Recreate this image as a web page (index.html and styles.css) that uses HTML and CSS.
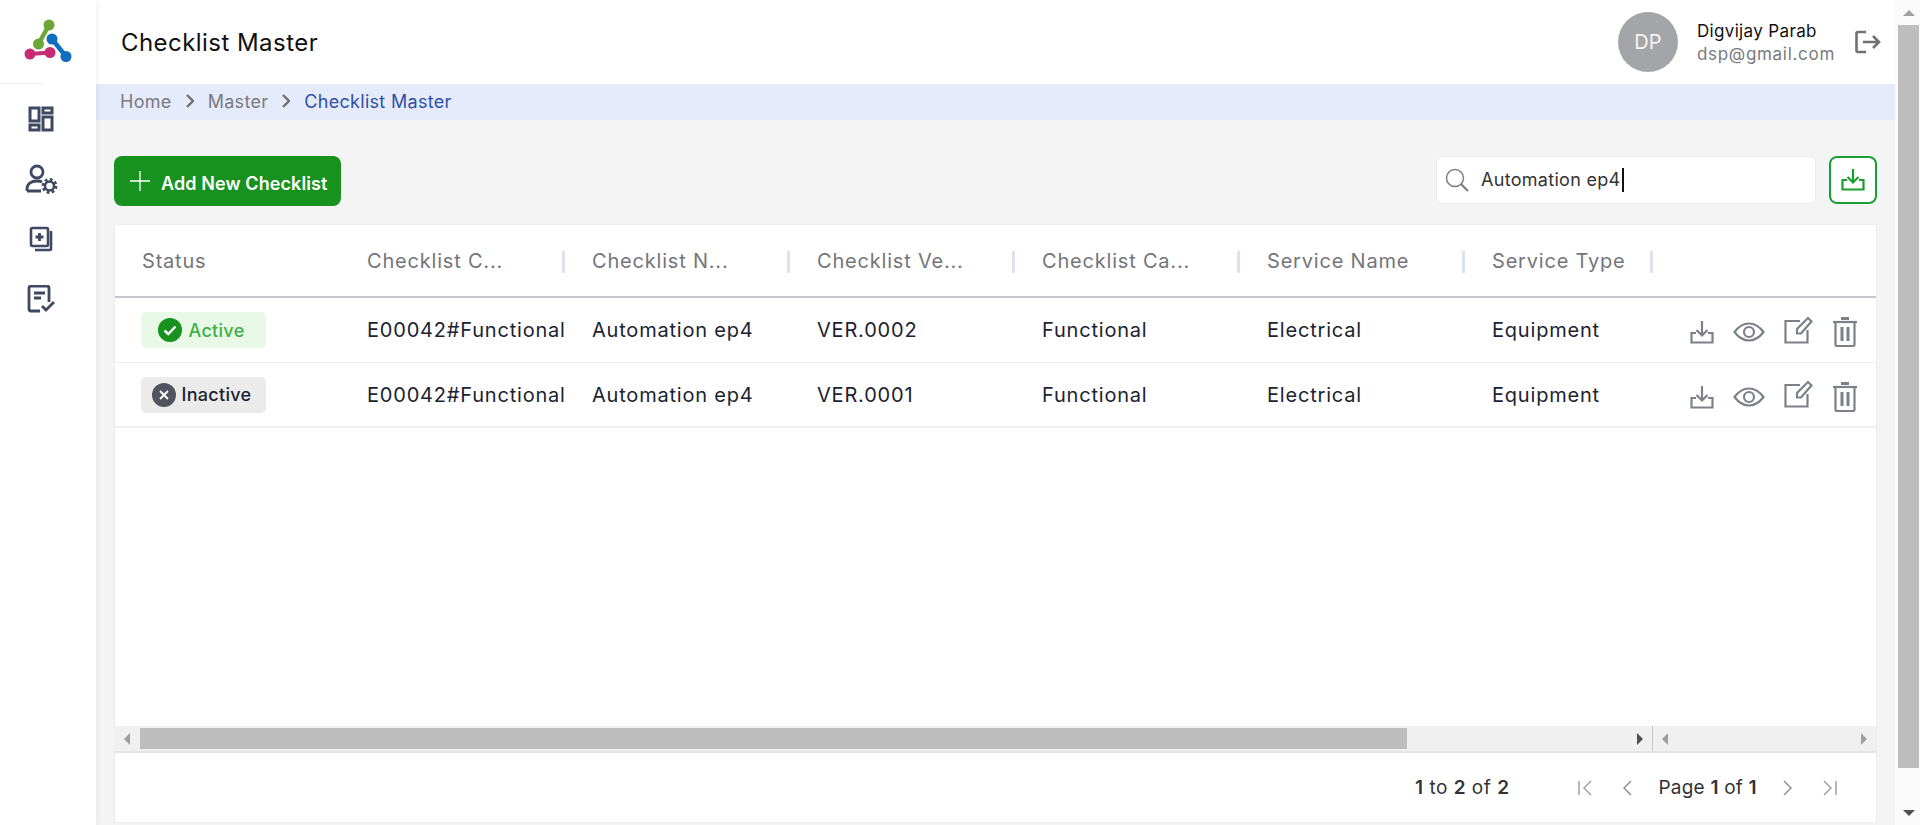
FILE: index.html
```html
<!DOCTYPE html>
<html lang="en">
<head>
  <meta charset="UTF-8" />
  <title>Checklist Master</title>
  <link rel="stylesheet" href="styles.css">
</head>
<body>
  <div class="app">
    <!-- Left icon rail -->
    <aside class="sidebar">
      <div class="logo">
        <svg width="60" height="60" viewBox="0 0 60 60">
          <g fill="#6ba637"><circle cx="49" cy="25" r="5.5"/><circle cx="38.500" cy="44" r="5.500"/><path d="M49 25L38.500 44" stroke="#6ba637" stroke-width="4.500"/></g>
          <g fill="#c62b73"><circle cx="30" cy="54" r="5.500"/><circle cx="50" cy="52.500" r="5.500"/><path d="M30 54L50 52.500" stroke="#c62b73" stroke-width="4"/></g>
          <g fill="#0f6fbe"><circle cx="52" cy="39" r="5.500"/><circle cx="66" cy="56.500" r="5.500"/><path d="M52 39L66 56.500" stroke="#0f6fbe" stroke-width="4.500"/></g>
        </svg>
      </div>
      <nav class="rail">
        <a href="#" class="rail-item">
          <svg width="26" height="26" viewBox="0 0 26 26" fill="none" stroke="#3f4861" stroke-width="3">
            <rect x="2" y="2" width="9" height="13"/><rect x="15" y="2" width="9" height="5"/><rect x="2" y="19" width="9" height="5"/><rect x="15" y="11" width="9" height="13"/>
          </svg>
        </a>
        <a href="#" class="rail-item">
          <svg class="gear-icon" width="32" height="30" viewBox="0 0 32 30" fill="none" stroke="#3f4861" stroke-width="2.800">
            <circle cx="12" cy="8" r="6"/><path d="M2 27v-2c0-5 4-8 10-8 2 0 4 .4 5 1M2 27h14"/>
            <circle cx="24.500" cy="22" r="4.500" stroke-width="2.600"/><circle cx="24.500" cy="22" r="6.600" stroke-dasharray="2.800 2.400" stroke-width="2.600"/>
          </svg>
        </a>
        <a href="#" class="rail-item">
          <svg width="24" height="26" viewBox="0 0 24 26" fill="none" stroke="#3f4861" stroke-width="2.600">
            <rect x="2" y="2" width="17" height="18" rx="1.500"/><path d="M22 5v18a1 1 0 0 1-1 1H6"/><path d="M10.500 7v8M6.500 11h8" stroke-width="2.800"/>
          </svg>
        </a>
        <a href="#" class="rail-item">
          <svg width="28" height="28" viewBox="0 0 28 28" fill="none" stroke="#3f4861" stroke-width="2.800">
            <path d="M13 26H4a2 2 0 0 1-2-2V3a2 2 0 0 1 2-2h16a2 2 0 0 1 2 2v14"/><path d="M7 8h11M7 13h7"/><path d="M15 21l4 4 8-8"/>
          </svg>
        </a>
      </nav>
    </aside>

    <div class="content">
      <header class="topbar">
        <h1>Checklist Master</h1>
        <div class="user">
          <div class="avatar">DP</div>
          <div class="user-info">
            <span class="user-name">Digvijay Parab</span>
            <span class="user-mail">dsp@gmail.com</span>
          </div>
          <svg class="logout" width="26" height="24" viewBox="0 0 26 24" fill="none" stroke="#717175" stroke-width="2.600">
            <path d="M11 2H3a1.500 1.500 0 0 0-1.500 1.500v17A1.500 1.500 0 0 0 3 22h8"/><path d="M8 12h16M18 6l6 6-6 6"/>
          </svg>
        </div>
      </header>

      <div class="crumbs">
        <a href="#">Home</a>
        <svg width="8" height="14" viewBox="0 0 8 14" fill="none" stroke="#707070" stroke-width="2.400"><path d="M1 1l6 6-6 6"/></svg>
        <a href="#">Master</a>
        <svg width="8" height="14" viewBox="0 0 8 14" fill="none" stroke="#707070" stroke-width="2.400"><path d="M1 1l6 6-6 6"/></svg>
        <span class="crumb-now">Checklist Master</span>
      </div>

      <main class="main">
        <div class="toolbar">
          <button class="add-btn">
            <svg width="20" height="20" viewBox="0 0 20 20" stroke="#fff" stroke-width="1.300"><path d="M10 0v20M0 10h20"/></svg>
            <span class="add-label">Add New Checklist</span>
          </button>
          <div class="toolbar-right">
            <div class="search">
              <svg width="24" height="24" viewBox="0 0 24 24" fill="none" stroke="#7b7d84" stroke-width="1.500"><circle cx="10" cy="10" r="8.500"/><path d="M16 16l7 7" stroke-width="2.200"/></svg>
              <span class="search-text">Automation ep4</span>
            </div>
            <button class="export-btn">
              <svg width="24" height="24" viewBox="0 0 24 24" fill="none" stroke="#18a02c" stroke-width="2.200"><path d="M12 1v13M6.500 9l5.500 5.500L17.500 9"/><path d="M6 12H1.500v9.500h21V12H18"/></svg>
            </button>
          </div>
        </div>

        <section class="grid-card">
          <div class="grid-row grid-head">
            <div class="cell">Status</div>
            <div class="cell sep">Checklist C...</div>
            <div class="cell sep">Checklist N...</div>
            <div class="cell sep">Checklist Ve...</div>
            <div class="cell sep">Checklist Ca...</div>
            <div class="cell sep">Service Name</div>
            <div class="cell sep">Service Type</div>
            <div class="cell"></div>
          </div>

          <div class="grid-row body-row">
            <div class="cell status-cell">
              <span class="badge badge-active">
                <svg width="24" height="24" viewBox="0 0 24 24"><circle cx="12" cy="12" r="12" fill="#18921e"/><path d="M6.500 12.500l3.800 3.500 7.200-7.500" fill="none" stroke="#fff" stroke-width="2.400"/></svg>
                Active
              </span>
            </div>
            <div class="cell">E00042#Functional</div>
            <div class="cell">Automation ep4</div>
            <div class="cell">VER.0002</div>
            <div class="cell">Functional</div>
            <div class="cell">Electrical</div>
            <div class="cell">Equipment</div>
            <div class="cell actions">
              <svg width="24" height="24" viewBox="0 0 24 24" fill="none" stroke="#7c8089" stroke-width="2.200"><path d="M12 1v14M6.500 10l5.500 5.500 5.500-5.500"/><path d="M6 13H1.500v9.500h21V13H18"/></svg>
              <svg width="32" height="20" viewBox="0 0 32 20" fill="none" stroke="#7c8089" stroke-width="2.200"><path d="M1.500 10C6 4 10.500 1.500 16 1.500S26 4 30.500 10C26 16 21.500 18.500 16 18.500S6 16 1.500 10z"/><circle cx="16" cy="10" r="5"/></svg>
              <svg class="edit-icon" width="29" height="28" viewBox="0 0 29 28" fill="none" stroke="#7c8089" stroke-width="2.200"><path d="M16 5H1.500v21.500h22V14"/><path d="M13 17.500v-4.500L24 2l3.500 3.500L17 17.500z"/></svg>
              <svg width="26" height="30" viewBox="0 0 26 30" fill="none" stroke="#7c8089" stroke-width="2.200"><path d="M1 5h24"/><path d="M9 1.500h8" stroke-width="3"/><path d="M3.500 5v22.500a1.500 1.500 0 0 0 1.500 1.500h16a1.500 1.500 0 0 0 1.500-1.500V5"/><path d="M10 10v14M16 10v14" stroke-width="3"/></svg>
            </div>
          </div>

          <div class="grid-row body-row last-row">
            <div class="cell status-cell">
              <span class="badge badge-inactive">
                <svg width="24" height="24" viewBox="0 0 24 24"><circle cx="12" cy="12" r="12" fill="#52555f"/><path d="M8 8l8 8M16 8l-8 8" fill="none" stroke="#fff" stroke-width="1.800"/></svg>
                Inactive
              </span>
            </div>
            <div class="cell">E00042#Functional</div>
            <div class="cell">Automation ep4</div>
            <div class="cell">VER.0001</div>
            <div class="cell">Functional</div>
            <div class="cell">Electrical</div>
            <div class="cell">Equipment</div>
            <div class="cell actions">
              <svg width="24" height="24" viewBox="0 0 24 24" fill="none" stroke="#7c8089" stroke-width="2.200"><path d="M12 1v14M6.500 10l5.500 5.500 5.500-5.500"/><path d="M6 13H1.500v9.500h21V13H18"/></svg>
              <svg width="32" height="20" viewBox="0 0 32 20" fill="none" stroke="#7c8089" stroke-width="2.200"><path d="M1.500 10C6 4 10.500 1.500 16 1.500S26 4 30.500 10C26 16 21.500 18.500 16 18.500S6 16 1.500 10z"/><circle cx="16" cy="10" r="5"/></svg>
              <svg class="edit-icon" width="29" height="28" viewBox="0 0 29 28" fill="none" stroke="#7c8089" stroke-width="2.200"><path d="M16 5H1.500v21.500h22V14"/><path d="M13 17.500v-4.500L24 2l3.500 3.500L17 17.500z"/></svg>
              <svg width="26" height="30" viewBox="0 0 26 30" fill="none" stroke="#7c8089" stroke-width="2.200"><path d="M1 5h24"/><path d="M9 1.500h8" stroke-width="3"/><path d="M3.500 5v22.500a1.500 1.500 0 0 0 1.500 1.500h16a1.500 1.500 0 0 0 1.500-1.500V5"/><path d="M10 10v14M16 10v14" stroke-width="3"/></svg>
            </div>
          </div>

          <div class="grid-empty"></div>

          <!-- Horizontal scrollbars of the grid -->
          <div class="hscroll">
            <div class="hscroll-center">
              <span class="tri tri-left"></span>
              <div class="hscroll-track"><div class="hscroll-thumb"></div></div>
              <span class="tri tri-right tri-dark"></span>
            </div>
            <div class="hscroll-pinned">
              <span class="tri tri-left"></span>
              <span class="tri tri-right"></span>
            </div>
          </div>

          <footer class="pager">
            <span class="pager-count"><b>1</b> to <b>2</b> of <b>2</b></span>
            <div class="pager-nav">
              <svg width="14" height="16" viewBox="0 0 14 16" fill="none" stroke="#9a9a9a" stroke-width="1.400"><path d="M1 1v14M13 1L6 8l7 7"/></svg>
              <svg width="10" height="16" viewBox="0 0 10 16" fill="none" stroke="#8a8a8a" stroke-width="1.400"><path d="M9 1L2 8l7 7"/></svg>
              <span class="pager-page">Page <b>1</b> of <b>1</b></span>
              <svg width="10" height="16" viewBox="0 0 10 16" fill="none" stroke="#8a8a8a" stroke-width="1.400"><path d="M1 1l7 7-7 7"/></svg>
              <svg width="14" height="16" viewBox="0 0 14 16" fill="none" stroke="#9a9a9a" stroke-width="1.400"><path d="M13 1v14M1 1l7 7-7 7"/></svg>
            </div>
          </footer>
        </section>
      </main>
    </div>

    <!-- Page scrollbar -->
    <div class="vscroll">
      <span class="tri tri-up"></span>
      <div class="vscroll-thumb"></div>
      <span class="tri tri-down"></span>
    </div>
  </div>
</body>
</html>
```

FILE: styles.css
```css
* {
  box-sizing: border-box;
}

html, body {
  margin: 0;
  padding: 0;
  height: 825px;
  overflow: hidden;
}

body {
  font-family: 'Inter', 'Noto Sans', sans-serif;
  font-size: 20px;
  letter-spacing: 0.8px;
  color: #1c2330;
  background-color: #f4f4f4;
}

a {
  color: inherit;
  text-decoration: none;
}

.app {
  display: flex;
  height: 825px;
}

/* sidebar */
.sidebar {
  width: 96px;
  flex-shrink: 0;
  background: #fff;
  box-shadow: 2px 0 5px rgba(0,0,0,0.05);
  position: relative;
  z-index: 2;
}

.logo {
  height: 84px;
  border-bottom: 1px solid #f1f1f1;
  margin-right: 52px;
}

.logo svg {
  display: block;
  overflow: visible;
}

.rail {
  display: flex;
  flex-direction: column;
  align-items: center;
  padding-top: 5px;
}

.rail-item {
  display: flex;
  align-items: center;
  justify-content: center;
  width: 48px;
  height: 60px;
  margin-left: -15px;
}

.rail-item svg {
  display: block;
}

.gear-icon {
  overflow: visible;
}

/* header */
.content {
  flex: 1;
  min-width: 0;
  display: flex;
  flex-direction: column;
}

.topbar {
  height: 84px;
  background: #fff;
  display: flex;
  justify-content: space-between;
  align-items: center;
  padding: 0 14px 0 25px;
}

.topbar h1 {
  margin: 0;
  font-size: 24px;
  font-weight: 400;
  letter-spacing: 0.45px;
  color: #111;
}

.user {
  display: flex;
  align-items: center;
}

.avatar {
  width: 60px;
  height: 60px;
  border-radius: 50%;
  background: #a4a5a9;
  color: #f4f4f4;
  font-size: 20px;
  letter-spacing: 0;
  display: flex;
  align-items: center;
  justify-content: center;
}

.user-info {
  display: flex;
  flex-direction: column;
  margin-left: 19px;
  gap: 3px;
}

.user-name {
  font-size: 17px;
  letter-spacing: 0.35px;
  color: #111;
}

.user-mail {
  font-size: 17px;
  letter-spacing: 0.7px;
  color: #7a7a7f;
}

.logout {
  margin-left: 20px;
}

/* breadcrumb */
.crumbs {
  height: 36px;
  background: #e5ebfa;
  display: flex;
  align-items: center;
  gap: 14px;
  padding: 0 0 2px 24px;
  font-size: 18px;
  letter-spacing: 0.3px;
  color: #7a7a7f;
}

.crumb-now {
  color: #2f4fa8;
}

/* toolbar */
.main {
  flex: 1;
  min-height: 0;
  padding: 36px 18px 0;
  display: flex;
  flex-direction: column;
}

.toolbar {
  display: flex;
  justify-content: space-between;
  align-items: flex-start;
  height: 68px;
}

.add-btn {
  width: 227px;
  height: 50px;
  background: #18921e;
  border: none;
  border-radius: 8px;
  color: #fff;
  font-family: inherit;
  font-size: 18px;
  font-weight: 600;
  letter-spacing: 0.1px;
  display: flex;
  align-items: center;
  gap: 11px;
  padding: 0 0 0 16px;
}

.add-label {
  padding-top: 4px;
}

.toolbar-right {
  display: flex;
  gap: 13px;
}

.search {
  width: 380px;
  height: 48px;
  background: #fff;
  border: 1px solid #ececec;
  border-radius: 6px;
  display: flex;
  align-items: center;
  gap: 12px;
  padding-left: 8px;
  font-size: 18px;
  letter-spacing: 0.3px;
  color: #333;
}

.search-text {
  border-right: 2px solid #111;
  padding-right: 1px;
  line-height: 24px;
}

.export-btn {
  width: 48px;
  height: 48px;
  background: #fff;
  border: 2px solid #18a038;
  border-radius: 8px;
  padding: 0;
  display: flex;
  align-items: center;
  justify-content: center;
}

/* grid */
.grid-card {
  flex: 1;
  min-height: 0;
  margin-bottom: 2px;
  background: #fff;
  border: 1px solid #ececec;
  display: flex;
  flex-direction: column;
}

.grid-row {
  display: grid;
  grid-template-columns: repeat(6, 225px) 188px 1fr;
}

.cell {
  display: flex;
  align-items: center;
  padding-left: 27px;
  white-space: nowrap;
  min-width: 0;
}

.grid-head {
  height: 73px;
  border-bottom: 2px solid #c6c6ce;
  color: #74757b;
}

.sep {
  position: relative;
}

.sep::after {
  content: '';
  position: absolute;
  right: 0;
  top: 26px;
  width: 3px;
  height: 22px;
  background: #dde2ee;
}

.body-row {
  height: 65px;
  border-bottom: 1px solid #efefef;
}

.last-row {
  border-bottom-width: 2px;
}

.status-cell {
  padding-left: 26px;
}

.badge {
  width: 125px;
  height: 36px;
  border-radius: 5px;
  display: flex;
  align-items: center;
  justify-content: center;
  gap: 6px;
  padding-right: 4px;
  font-size: 18px;
  font-weight: 500;
  letter-spacing: 0.3px;
}

.badge-active {
  background: #e8f9e8;
  color: #3fb043;
}

.badge-inactive {
  background: #ebebeb;
  color: #1c2330;
}

.actions {
  padding-left: 37px;
  padding-top: 4px;
  gap: 19px;
}

.actions svg {
  flex-shrink: 0;
}

.edit-icon {
  margin-top: -5px;
}

.grid-empty {
  flex: 1;
}

/* grid scrollbars */
.hscroll {
  height: 27px;
  background: #f0f0f0;
  border-bottom: 2px solid #e4e4e4;
  display: flex;
}

.hscroll-center {
  width: 1538px;
  display: flex;
  align-items: center;
  border-right: 1px solid #c8c8c8;
}

.hscroll-track {
  flex: 1;
  height: 21px;
  padding-left: 2px;
}

.hscroll-thumb {
  width: 1267px;
  height: 100%;
  background: #bebebe;
}

.hscroll-pinned {
  flex: 1;
  display: flex;
  align-items: center;
  justify-content: space-between;
}

.tri {
  display: block;
  width: 0;
  height: 0;
  flex-shrink: 0;
}

.tri-left {
  margin: 0 8px 0 9px;
  border-top: 6px solid transparent;
  border-bottom: 6px solid transparent;
  border-right: 6px solid #9e9e9e;
}

.tri-right {
  margin: 0 9px 0 8px;
  border-top: 6px solid transparent;
  border-bottom: 6px solid transparent;
  border-left: 6px solid #9e9e9e;
}

.tri-dark {
  border-left-color: #4f4f4f;
}

.pager {
  height: 69px;
  display: flex;
  align-items: center;
  font-size: 19px;
  letter-spacing: 0.5px;
  padding-left: 1300px;
  color: #333;
}

.pager b {
  font-weight: 600;
}

.pager-nav {
  display: flex;
  align-items: center;
  margin-left: 69px;
  gap: 30px;
}

.pager-page {
  white-space: nowrap;
  letter-spacing: 0.2px;
  margin: 0 -4px;
}

/* page scrollbar */
.vscroll {
  width: 25px;
  flex-shrink: 0;
  background: #fafafa;
  display: flex;
  flex-direction: column;
  align-items: center;
  padding: 10px 0 9px 2px;
}

.vscroll-thumb {
  width: 21px;
  height: 743px;
  margin: 9px 0 auto;
  background: #bebebe;
}

.tri-up {
  border-left: 6px solid transparent;
  border-right: 6px solid transparent;
  border-bottom: 6px solid #a0a0a0;
}

.tri-down {
  border-left: 6px solid transparent;
  border-right: 6px solid transparent;
  border-top: 6px solid #505050;
}
```
